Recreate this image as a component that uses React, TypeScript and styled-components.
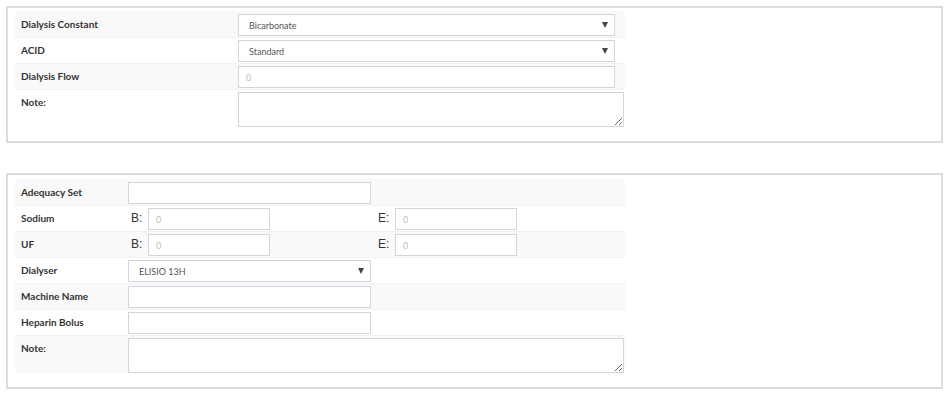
import React from 'react'
import styled, { createGlobalStyle } from 'styled-components'

const GlobalStyle = createGlobalStyle`
  html, body {
    margin: 0;
    padding: 0;
    background: #fff;
  }
  body {
    font-family: Lato, "Liberation Sans", sans-serif;
    color: #333;
  }
`

const Page = styled.div`
  display: flex;
  flex-direction: column;
  gap: 30px;
  padding: 6px 7px 6px 6px;
`

const Panel = styled.section<{ $top: number; $bottom: number }>`
  border: 2px solid #dcdcdc;
  padding: ${({ $top, $bottom }) => `${$top}px 7px ${$bottom}px`};
`

const Table = styled.div`
  width: 610px;
  display: flex;
  flex-direction: column;
`

const Row = styled.div<{ $label: number }>`
  display: grid;
  grid-template-columns: ${({ $label }) => $label}px 1fr;
  border-top: 1px solid #f1f1f1;
  &:first-child {
    border-top-color: transparent;
  }
  &:nth-child(odd) {
    background: #f9f9f9;
  }
`

const Label = styled.div`
  font-size: 10px;
  font-weight: 700;
  line-height: 14px;
  color: #333;
  padding: 5px 6px 0;
`

const Field = styled.div<{ $pb?: number }>`
  padding: 2px 0 ${({ $pb }) => $pb ?? 1}px;
  display: flex;
  align-items: flex-start;
`

const Input = styled.input.attrs(() => ({ type: 'text' }))<{ $w: number }>`
  display: block;
  box-sizing: border-box;
  width: ${({ $w }) => $w}px;
  height: 22px;
  margin: 0;
  padding: 0 7px;
  border: 1px solid #d3d5de;
  border-radius: 0;
  background: #fff;
  font-family: Lato, "Liberation Sans", sans-serif;
  font-size: 9px;
  color: #555;
  outline: none;
  &::placeholder {
    color: #c9bcb2;
  }
`

const TextArea = styled.textarea<{ $w: number }>`
  box-sizing: border-box;
  display: block;
  width: ${({ $w }) => $w}px;
  height: 35px;
  margin: 0;
  padding: 4px 7px;
  border: 1px solid #d3d5de;
  border-radius: 0;
  font-family: Lato, "Liberation Sans", sans-serif;
  font-size: 9px;
  outline: none;
`

const SelectWrap = styled.div<{ $w: number }>`
  position: relative;
  width: ${({ $w }) => $w}px;
  &::after {
    content: '';
    position: absolute;
    right: 7px;
    top: 8px;
    border-left: 3.5px solid transparent;
    border-right: 3.5px solid transparent;
    border-top: 6px solid #444;
    pointer-events: none;
  }
`

const Select = styled.select`
  appearance: none;
  display: block;
  box-sizing: border-box;
  width: 100%;
  height: 22px;
  margin: 0;
  padding: 0 20px 0 10px;
  border: 1px solid #d3d5de;
  border-radius: 0;
  background: #fff;
  font-family: Lato, "Liberation Sans", sans-serif;
  font-size: 9px;
  color: #555;
  outline: none;
`

const Pair = styled.div`
  display: grid;
  grid-template-columns: 247px 247px;
`

const PairItem = styled.div`
  display: flex;
  align-items: flex-start;
`

const Tag = styled.span`
  width: 20px;
  box-sizing: border-box;
  padding: 3px 0 0 3px;
  font-family: "Liberation Sans", Arial, sans-serif;
  font-size: 12px;
  line-height: 14px;
  color: #333;
`

const Dropdown = ({ value, w }: { value: string; w: number }) => (
  <SelectWrap $w={w}>
    <Select defaultValue={value}>
      <option>{value}</option>
    </Select>
  </SelectWrap>
)

const BE = () => (
  <Pair>
    <PairItem>
      <Tag>B:</Tag>
      <Input $w={122} placeholder="0" />
    </PairItem>
    <PairItem>
      <Tag>E:</Tag>
      <Input $w={122} placeholder="0" />
    </PairItem>
  </Pair>
)

export default function App() {
  return (
    <>
      <GlobalStyle />
      <Page>
        <Panel $top={3} $bottom={13}>
          <Table>
            <Row $label={223}>
              <Label>Dialysis Constant</Label>
              <Field>
                <Dropdown value="Bicarbonate" w={377} />
              </Field>
            </Row>
            <Row $label={223}>
              <Label>ACID</Label>
              <Field>
                <Dropdown value="Standard" w={377} />
              </Field>
            </Row>
            <Row $label={223}>
              <Label>Dialysis Flow</Label>
              <Field>
                <Input $w={377} placeholder="0" />
              </Field>
            </Row>
            <Row $label={223}>
              <Label>Note:</Label>
              <Field $pb={1}>
                <TextArea $w={386} />
              </Field>
            </Row>
          </Table>
        </Panel>

        <Panel $top={4} $bottom={14}>
          <Table>
            <Row $label={113}>
              <Label>Adequacy Set</Label>
              <Field>
                <Input $w={243} />
              </Field>
            </Row>
            <Row $label={113}>
              <Label>Sodium</Label>
              <Field>
                <BE />
              </Field>
            </Row>
            <Row $label={113}>
              <Label>UF</Label>
              <Field>
                <BE />
              </Field>
            </Row>
            <Row $label={113}>
              <Label>Dialyser</Label>
              <Field>
                <Dropdown value="ELISIO 13H" w={243} />
              </Field>
            </Row>
            <Row $label={113}>
              <Label>Machine Name</Label>
              <Field>
                <Input $w={243} />
              </Field>
            </Row>
            <Row $label={113}>
              <Label>Heparin Bolus</Label>
              <Field>
                <Input $w={243} />
              </Field>
            </Row>
            <Row $label={113}>
              <Label>Note:</Label>
              <Field $pb={0}>
                <TextArea $w={496} />
              </Field>
            </Row>
          </Table>
        </Panel>
      </Page>
    </>
  )
}
